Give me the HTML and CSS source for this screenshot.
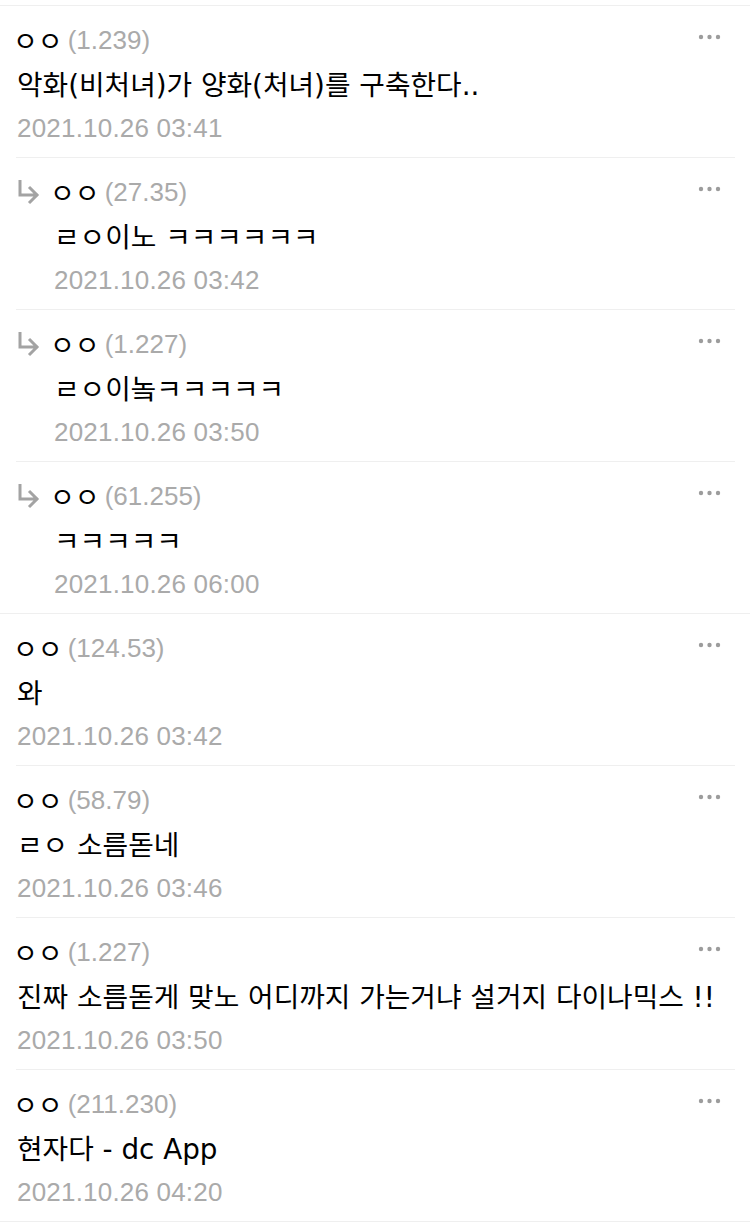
FILE: index.html
```html
<!DOCTYPE html>
<html lang="ko">
<head>
<meta charset="utf-8">
<title>댓글</title>
<link rel="stylesheet" href="styles.css">
</head>
<body>
<ul class="comments">
  <li class="comment full">
    <div class="head"><span class="name">ㅇㅇ</span><span class="ip">(1.239)</span>
      <svg class="more" viewBox="0 0 24 6" width="24" height="6"><circle cx="3" cy="3" r="2.2"/><circle cx="11.5" cy="3" r="2.2"/><circle cx="20" cy="3" r="2.2"/></svg></div>
    <div class="body"><p class="text">악화(비처녀)가 양화(처녀)를 구축한다..</p><div class="date">2021.10.26 03:41</div></div>
  </li>
  <li class="comment reply">
    <div class="head"><svg class="arrow" viewBox="0 0 24 26" width="24" height="26"><path d="M3 1V16H21M12 8L20 16L12 24"/></svg><span class="name">ㅇㅇ</span><span class="ip">(27.35)</span>
      <svg class="more" viewBox="0 0 24 6" width="24" height="6"><circle cx="3" cy="3" r="2.2"/><circle cx="11.5" cy="3" r="2.2"/><circle cx="20" cy="3" r="2.2"/></svg></div>
    <div class="body"><p class="text">ㄹㅇ이노 ㅋㅋㅋㅋㅋㅋ</p><div class="date">2021.10.26 03:42</div></div>
  </li>
  <li class="comment reply">
    <div class="head"><svg class="arrow" viewBox="0 0 24 26" width="24" height="26"><path d="M3 1V16H21M12 8L20 16L12 24"/></svg><span class="name">ㅇㅇ</span><span class="ip">(1.227)</span>
      <svg class="more" viewBox="0 0 24 6" width="24" height="6"><circle cx="3" cy="3" r="2.2"/><circle cx="11.5" cy="3" r="2.2"/><circle cx="20" cy="3" r="2.2"/></svg></div>
    <div class="body"><p class="text">ㄹㅇ이놐ㅋㅋㅋㅋㅋ</p><div class="date">2021.10.26 03:50</div></div>
  </li>
  <li class="comment reply">
    <div class="head"><svg class="arrow" viewBox="0 0 24 26" width="24" height="26"><path d="M3 1V16H21M12 8L20 16L12 24"/></svg><span class="name">ㅇㅇ</span><span class="ip">(61.255)</span>
      <svg class="more" viewBox="0 0 24 6" width="24" height="6"><circle cx="3" cy="3" r="2.2"/><circle cx="11.5" cy="3" r="2.2"/><circle cx="20" cy="3" r="2.2"/></svg></div>
    <div class="body"><p class="text">ㅋㅋㅋㅋㅋ</p><div class="date">2021.10.26 06:00</div></div>
  </li>
  <li class="comment full">
    <div class="head"><span class="name">ㅇㅇ</span><span class="ip">(124.53)</span>
      <svg class="more" viewBox="0 0 24 6" width="24" height="6"><circle cx="3" cy="3" r="2.2"/><circle cx="11.5" cy="3" r="2.2"/><circle cx="20" cy="3" r="2.2"/></svg></div>
    <div class="body"><p class="text">와</p><div class="date">2021.10.26 03:42</div></div>
  </li>
  <li class="comment">
    <div class="head"><span class="name">ㅇㅇ</span><span class="ip">(58.79)</span>
      <svg class="more" viewBox="0 0 24 6" width="24" height="6"><circle cx="3" cy="3" r="2.2"/><circle cx="11.5" cy="3" r="2.2"/><circle cx="20" cy="3" r="2.2"/></svg></div>
    <div class="body"><p class="text">ㄹㅇ 소름돋네</p><div class="date">2021.10.26 03:46</div></div>
  </li>
  <li class="comment">
    <div class="head"><span class="name">ㅇㅇ</span><span class="ip">(1.227)</span>
      <svg class="more" viewBox="0 0 24 6" width="24" height="6"><circle cx="3" cy="3" r="2.2"/><circle cx="11.5" cy="3" r="2.2"/><circle cx="20" cy="3" r="2.2"/></svg></div>
    <div class="body"><p class="text">진짜 소름돋게 맞노 어디까지 가는거냐 설거지 다이나믹스 !!</p><div class="date">2021.10.26 03:50</div></div>
  </li>
  <li class="comment">
    <div class="head"><span class="name">ㅇㅇ</span><span class="ip">(211.230)</span>
      <svg class="more" viewBox="0 0 24 6" width="24" height="6"><circle cx="3" cy="3" r="2.2"/><circle cx="11.5" cy="3" r="2.2"/><circle cx="20" cy="3" r="2.2"/></svg></div>
    <div class="body"><p class="text">현자다 - dc App</p><div class="date">2021.10.26 04:20</div></div>
  </li>
</ul>
</body>
</html>
```

FILE: styles.css
```css
html, body {
  margin: 0;
  background: #ffffff;
}

.comments {
  list-style: none;
  margin: 0;
  padding: 5px 0 0;
  border-bottom: 1px solid #efefef;
}

.comment {
  margin: 0 15px 0 16px;
  padding: 18px 0 11px 1px;
  border-top: 1px solid #efefef;
}

.comment.full {
  margin: 0;
  padding-left: 17px;
  padding-right: 15px;
}

.head {
  display: flex;
  align-items: center;
  height: 32px;
}

.name {
  font-family: "Noto Sans CJK KR", sans-serif;
  font-size: 27px;
  line-height: 32px;
  color: #000000;
  margin-left: -4px;
}

.ip {
  font-family: "Liberation Sans", Arial, sans-serif;
  font-size: 26px;
  line-height: 32px;
  color: #aaaaaa;
  margin-left: 5px;
}

.more {
  margin-left: auto;
  margin-right: 13px;
  margin-bottom: 6px;
  fill: #9c9c9c;
}

.arrow {
  flex: none;
  margin-right: 13px;
  fill: none;
  stroke: #a3a3a3;
  stroke-width: 3;
}

.reply .body {
  padding-left: 37px;
}

.text {
  margin: 8px 0 0;
  font-family: "DejaVu Sans", "Noto Sans CJK KR", sans-serif;
  font-size: 27.8px;
  line-height: 44px;
  color: #000000;
}

.date {
  margin-top: 2px;
  font-family: "Liberation Sans", Arial, sans-serif;
  font-size: 26px;
  line-height: 36px;
  letter-spacing: 0.2px;
  color: #aaaaaa;
}
```
